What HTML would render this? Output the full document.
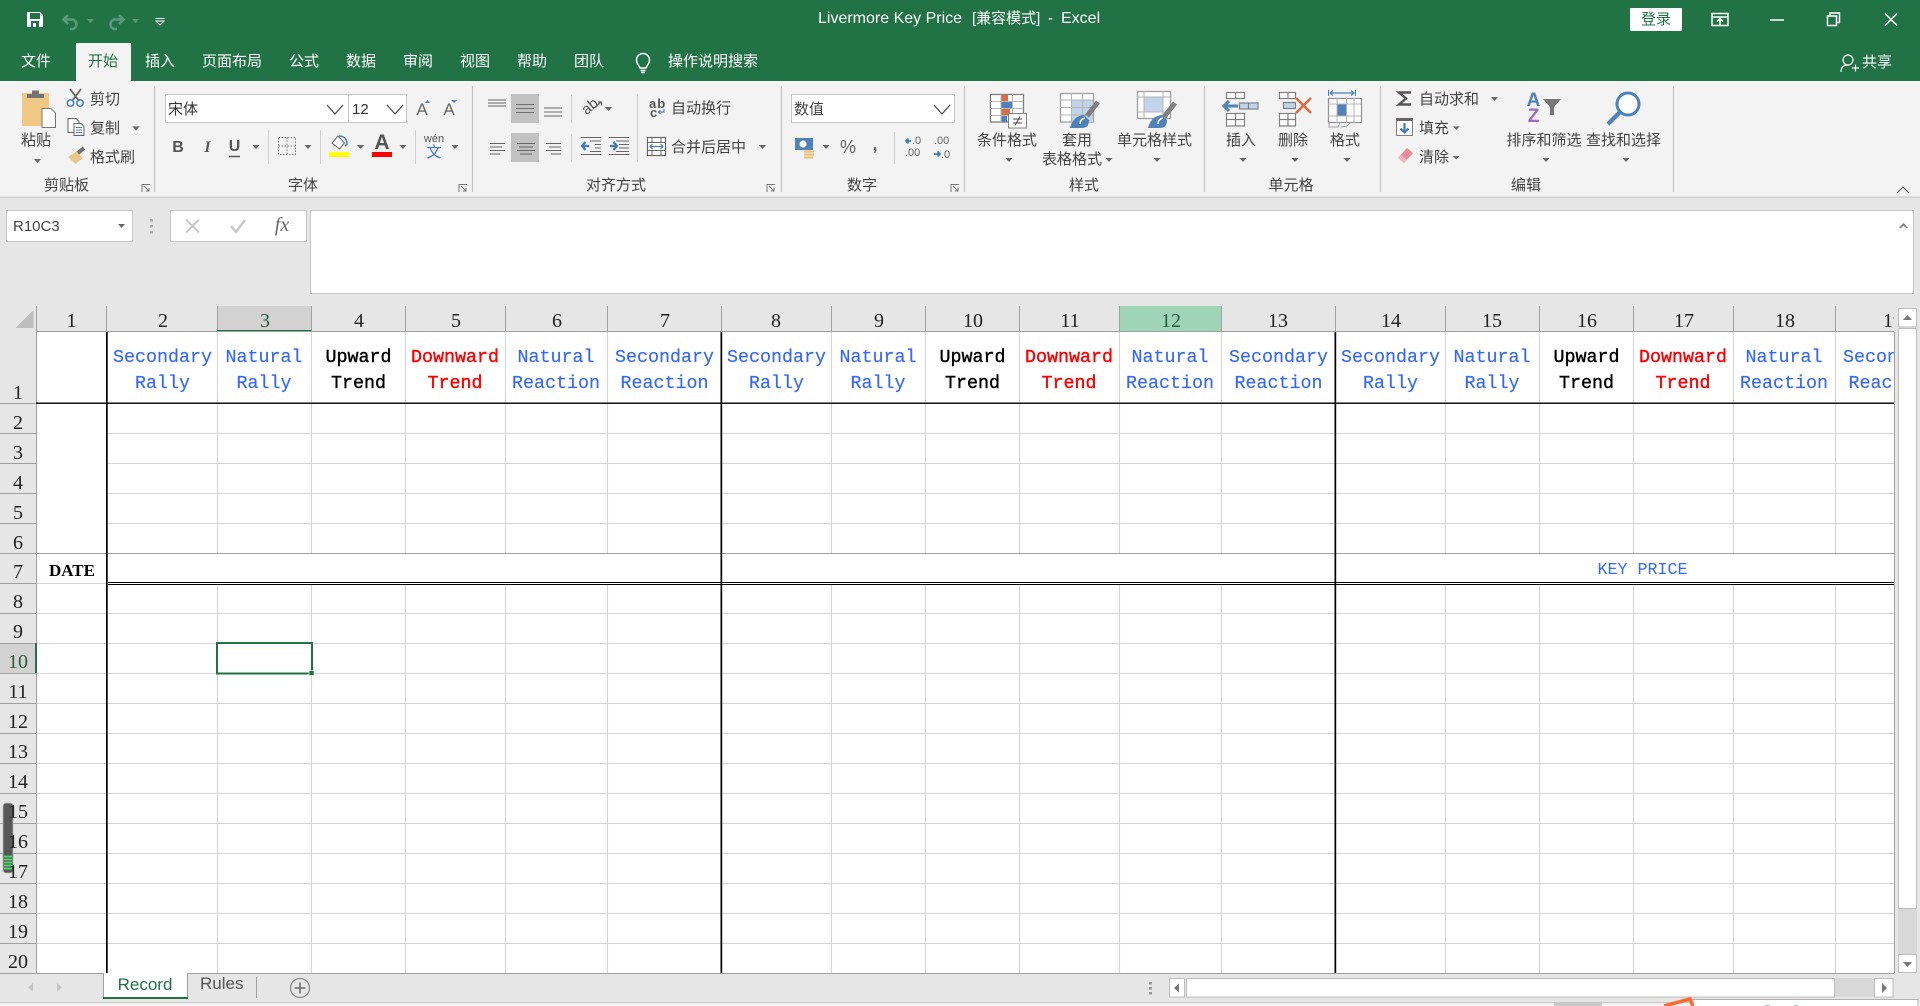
<!DOCTYPE html>
<html lang="zh"><head><meta charset="utf-8"><title>Livermore Key Price - Excel</title>
<style>
html,body{margin:0;padding:0;width:1920px;height:1006px;overflow:hidden;background:#e6e6e6}
body{position:relative;font-family:"Liberation Sans","Noto Sans CJK SC",sans-serif}
svg.g{position:absolute;left:0;top:0}
.t{position:absolute;white-space:nowrap;line-height:20px;font-size:15px;color:#444;margin-top:1px}
.c{transform:translateX(-50%)}
.w{color:#fff}
.n{font-family:"Liberation Serif",serif;font-size:20px;color:#222;line-height:20px}
.h{position:absolute;white-space:nowrap;font-family:"Liberation Mono",monospace;font-size:18.33px;line-height:26px;text-align:center;transform:translateX(-50%);margin-top:1px}
.b{color:#3366ff;-webkit-text-stroke:.15px #3366ff}.k{color:#000;-webkit-text-stroke:.4px #000}.r{color:#ff0000;-webkit-text-stroke:.4px #ff0000}
#clip{position:absolute;left:0;top:332px;width:1894px;height:72px;overflow:hidden}
</style></head><body>
<svg class="g" width="1920" height="1006" viewBox="0 0 1920 1006" xmlns="http://www.w3.org/2000/svg" fill="none">
<!-- title & ribbon backgrounds -->
<rect width="1920" height="81" fill="#217346"/>
<rect x="76" y="43" width="55" height="38" fill="#f3f3f3"/>
<rect y="81" width="1920" height="116" fill="#f3f3f3"/>
<rect y="196.500" width="1920" height="1.500" fill="#d2d2d2"/>
<!-- QAT -->
<path d="M27 12h13l3 3v12H27z" fill="#fff"/><rect x="30" y="13" width="10" height="6" fill="#217346"/><rect x="31" y="21" width="8" height="6" fill="#217346"/><rect x="33" y="23" width="3" height="4" fill="#fff"/>
<g stroke="#5a9a7b" stroke-width="2.600"><path d="M68 15l-4.500 4.500 4.500 4.500M64 19.500h9a5 5 0 0 1 0 9.500h-3"/><path d="M119 15l4.500 4.500-4.500 4.500M123 19.500h-9a5 5 0 0 0 0 9.500h3"/></g>
<path d="M87 19h7l-3.500 4zM132 19h7l-3.500 4z" fill="#5a9a7b"/>
<path d="M155.500 18.500h9M156 21h8l-4 4z" stroke="#fff" stroke-width="1"/>
<!-- window controls -->
<rect x="1630" y="8" width="52" height="23" rx="1" fill="#fff"/>
<g stroke="#fff" stroke-width="1.500"><rect x="1712" y="13.500" width="16" height="12"/><path d="M1712 17h16M1720 25v-6M1717 21.500l3-3 3 3"/><path d="M1770 20h14"/><rect x="1827.500" y="16" width="9" height="9.500"/><path d="M1830 16v-3h9.500v9.500h-3"/><path d="M1885 13.500l12 12M1897 13.500l-12 12"/>
<circle cx="1848" cy="60" r="5" stroke-width="1.200"/><path d="M1841 72c0-5 3-7 7-7M1852 68h7M1855.500 64.500v7" stroke-width="1.200"/></g>
<!-- bulb -->
<g stroke="#fff" stroke-width="1.500"><path d="M640 68c-1-3-3.500-4-3.500-8a6.500 6.500 0 0 1 13 0c0 4-2.500 5-3.500 8z"/><path d="M640.500 70.500h5M641 72.500h4"/></g>
<!-- ribbon separators -->
<path d="M154.500 86v106M472.500 86v106M781.500 86v106M964.500 86v106M1204.500 86v106M1380.500 86v106M1673.500 86v106" stroke="#c4c4c4" stroke-width="1.200"/>
<path d="M268.500 130v34M320.500 130v34M415.500 130v34M571.500 95v28M571.500 134v28M637.500 94v68M894.500 132v32" stroke="#d0d0d0"/>
<!-- dialog launchers -->
<g stroke="#777"><path d="M142 192v-7.500h8M144 186l5 5M149 188v3h-3"/><path d="M459 192v-7.500h8M461 186l5 5M466 188v3h-3"/><path d="M767 192v-7.500h8M769 186l5 5M774 188v3h-3"/><path d="M951 192v-7.500h8M953 186l5 5M958 188v3h-3"/></g>
<path d="M1897 193l6-6 6 6" stroke="#555" stroke-width="1.100"/>
<!-- Clipboard group -->
<rect x="22" y="93" width="27" height="33" rx="1" fill="#efc983"/><path d="M27 98v-4h5v-3.500h7v3.500h5v4z" fill="#737373"/>
<path d="M42 108.500h9l4.500 4.500v14.500H42z" fill="#fff" stroke="#777"/>
<path d="M34 159h7l-3.500 4zM132.500 126.500h7l-3.500 4z" fill="#666"/>
<g stroke="#666" stroke-width="1.800"><path d="M70 89l9 12M81 89l-9 12"/></g><g stroke="#4f82b8" stroke-width="1.600"><circle cx="70.500" cy="103" r="3.200"/><circle cx="80" cy="103" r="3.200"/></g>
<path d="M68 118.500h8l3 3v11H68z" fill="#fff" stroke="#666"/><path d="M74 123.500h7l3 3v9H74z" fill="#fff" stroke="#666"/><path d="M76 127.500h6M76 130h6M76 132.500h6" stroke="#4f82b8"/>
<path d="M68 157l9-6 5.500 7-7 6z" fill="#e8c78a"/><path d="M78 153l6-5" stroke="#6e6e6e" stroke-width="4"/>
<!-- Font boxes -->
<rect x="165.500" y="94.500" width="183" height="28" fill="#fff" stroke="#c6c6c6"/><rect x="348.500" y="94.500" width="58" height="28" fill="#fff" stroke="#c6c6c6"/>
<g stroke="#444" stroke-width="1.200"><path d="M327 105l8 9 8-9M387 105l8 9 8-9"/></g>
<path d="M425 103l2.500-3 2.500 3z" fill="#4f82b8"/><path d="M451 100h6l-3 3z" fill="#4f82b8"/>
<path d="M252.500 145h7l-3.500 4zM304.500 145h7l-3.500 4zM357 145h7l-3.500 4zM399.500 145h7l-3.500 4zM451.500 145h7l-3.500 4zM605 107h7l-3.500 4zM759 145h7l-3.500 4zM822.500 145h7l-3.500 4z" fill="#666"/>
<path d="M229 156.500h11" stroke="#555" stroke-width="1.500"/>
<path d="M278.500 137.500h17v17h-17zM287 137.500v17M278.500 146h17" stroke="#777" stroke-dasharray="1.500 1.500"/>
<path d="M332 143l6-7 6.500 7-5 6z" fill="#fff" stroke="#666"/><path d="M339 136c5 0 8 3 8 8l-2 2" stroke="#4f82b8" stroke-width="1.600"/>
<rect x="329" y="152" width="20" height="5" fill="#ffff00"/><rect x="372" y="152" width="20" height="5" fill="#ff0000"/>
<!-- Alignment -->
<rect x="511" y="94" width="28" height="29" fill="#c2c2c2"/><rect x="511" y="133" width="28" height="29" fill="#c2c2c2"/>
<g stroke="#666" stroke-width="1.100"><path d="M488 100h18M488 103h18M488 106h18"/><path d="M516 104.500h18M516 108.500h18M516 112.500h18" stroke="#707070"/><path d="M544 108h18M544 112h18M544 116h18"/>
<path d="M490 143.500h15M490 147h12M490 150.500h15M490 154h10"/><path d="M517 143.500h18M519 147h14M517 150.500h18M520 154h12"/><path d="M546 143.500h15M549 147h12M546 150.500h15M551 154h10"/>
<path d="M590 141h11M595 144.500h6M595 148h6M590 151.500h11"/><path d="M581 154.500h20M581 137.500h20"/><path d="M609 137.500h20M616 141h13M619 144.500h10M619 148h10M616 151.500h13M609 154.500h20"/></g>
<path d="M582 146h7M585.500 142l-3.500 4 3.500 4M610 146h7M613.500 142l3.500 4-3.500 4" stroke="#3f7ab7" stroke-width="2.200"/>
<path d="M594 108l7-6M598 102h3.500v3.500" stroke="#666" stroke-width="1.300"/>
<path d="M664 109v3h-5M660.500 110l-2 2 2 2" stroke="#4f82b8" stroke-width="1.200"/>
<rect x="647.500" y="137.500" width="18" height="18" fill="#fff" stroke="#666" stroke-width="1.200"/><path d="M647 142.500h19M647 150.500h19M652 137.500v5M661 137.500v5M652 150.500v5M661 150.500v5" stroke="#666"/><path d="M650 146.500h13M652.500 144l-2.500 2.500 2.500 2.500M660.500 144l2.500 2.500-2.500 2.500" stroke="#4f82b8" stroke-width="1.200"/>
<!-- Number -->
<rect x="791.500" y="94.500" width="163" height="28" fill="#fff" stroke="#c6c6c6"/>
<path d="M934 105l8 9 8-9" stroke="#444" stroke-width="1.200"/>
<rect x="795" y="138" width="18" height="12" fill="#4f82b8"/><circle cx="803" cy="144" r="3.500" fill="#fff"/><path d="M804 151.500h10M804 154.500h10M804 157.500h9" stroke="#eac27c" stroke-width="2.200"/>
<path d="M911 141h-5M908.500 138.500l-2.500 2.500 2.500 2.500M934 154h6M937.500 151.500l2.500 2.500-2.500 2.500" stroke="#3f7ab7" stroke-width="1.800"/>
<!-- Cond format -->
<g stroke="#808080" stroke-width="1.300"><rect x="990.500" y="94.500" width="33" height="27.500" fill="#fff"/></g>
<rect x="1001" y="95" width="7" height="6.500" fill="#da6b45"/><rect x="1001" y="102" width="12" height="6.500" fill="#4f82b8"/><rect x="1001" y="109" width="9" height="6.500" fill="#da6b45"/><rect x="1001" y="116" width="6" height="6" fill="#4f82b8"/>
<path d="M990 101.500h33M990 108.500h33M990 115.500h33M1001 94v28M1012.500 94v28" stroke="#b8b8b8"/>
<rect x="1008.500" y="113.500" width="18" height="14.500" fill="#fff" stroke="#808080"/><path d="M1013 119h9M1013 123h9M1020 116.500l-5 9" stroke="#444"/>
<!-- Table style -->
<rect x="1060.500" y="93.500" width="33" height="28.500" fill="#fff" stroke="#a0a0a0" stroke-width="1.300"/><rect x="1072" y="100" width="21" height="22" fill="#c0d5ea"/><path d="M1060 100h33M1060 107.500h33M1060 115h33M1071.500 93v29M1082.500 93v29" stroke="#b4b4b4"/>
<path d="M1098 102l-11 14" stroke="#808080" stroke-width="5"/>
<path d="M1070 128q3-12 14-13l5 5q0 8-7 8z" fill="#4f82b8"/><path d="M1080 124q0-5 5-6" stroke="#fff" stroke-width="1.500"/>
<!-- Cell style -->
<rect x="1137.500" y="91.500" width="33" height="27" fill="#fff" stroke="#a0a0a0" stroke-width="1.300"/><rect x="1144" y="97" width="19" height="15" fill="#c0d5ea"/><path d="M1137 97h33M1137 112h33M1144 91v27M1163 91v27" stroke="#b4b4b4"/>
<path d="M1175 103l-11 14" stroke="#808080" stroke-width="5"/>
<path d="M1148 128q3-12 14-13l5 5q0 8-7 8z" fill="#4f82b8"/><path d="M1158 124q0-5 5-6" stroke="#fff" stroke-width="1.500"/>
<!-- Insert -->
<g stroke="#808080" stroke-width="1.200"><rect x="1226.500" y="92.500" width="18" height="6" fill="#fff"/><path d="M1235.500 92v7"/><rect x="1239.500" y="103" width="18.500" height="6" fill="#c0d5ea"/><path d="M1248.500 103v6"/><rect x="1226.500" y="113.500" width="18" height="12.500" fill="#fff"/><path d="M1235.500 113v13M1226 119.500h18"/></g>
<path d="M1238 106h-14M1229 101l-5 5 5 5" stroke="#4f82b8" stroke-width="3"/>
<!-- Delete -->
<g stroke="#808080" stroke-width="1.200"><rect x="1279.500" y="92.500" width="16" height="6" fill="#fff"/><path d="M1288 92v7"/><rect x="1283.500" y="102.500" width="12" height="6" fill="#c0d5ea"/><rect x="1279.500" y="113.500" width="16" height="12.500" fill="#fff"/><path d="M1288 113v13M1279 119.500h16"/></g>
<path d="M1296 98l15 15M1311 98l-15 15" stroke="#da6b45" stroke-width="2.600"/>
<!-- Format -->
<path d="M1328.500 90v6M1355.500 90v6" stroke="#4f82b8"/><path d="M1330 93h24M1333 90.500l-3 2.500 3 2.500M1351 90.500l3 2.500-3 2.500" stroke="#4f82b8" stroke-width="1.300"/>
<rect x="1328.500" y="98.500" width="33" height="24" fill="#fff" stroke="#909090" stroke-width="1.200"/><rect x="1337" y="104" width="9.500" height="12" fill="#4f82b8"/><path d="M1337 98v25M1346.500 98v25M1354 98v25M1328 104h33M1328 116h33" stroke="#b4b4b4"/>
<path d="M1329 123v4h9l2-4M1341 127l6-1 3-3" stroke="#a0a0a0"/>
<!-- Editing -->
<path d="M1411 92.500h-12l7 6-7 6h12" stroke="#555" stroke-width="2.400"/>
<rect x="1396.500" y="118.500" width="16" height="17" fill="#fff" stroke="#808080"/><rect x="1396" y="118" width="17" height="3" fill="#666"/><path d="M1404.500 123v9M1400.500 128.500l4 4 4-4" stroke="#3f7ab7" stroke-width="2.200"/>
<path d="M1398 158l9-10 6 5-9 10z" fill="#e98b9d"/><path d="M1398 158l3-3 6 5-3 3z" fill="#f2b5c0"/>
<path d="M1491 97h7l-3.500 4zM1453 126.500h6.500l-3.250 3.500zM1453 156h6.500l-3.250 3.500z" fill="#666"/>
<path d="M1543 99h18l-7 8v8h-4v-8z" fill="#777"/>
<circle cx="1628" cy="104" r="11" fill="#fff" stroke="#4f82b8" stroke-width="3"/><path d="M1620 112l-12 12" stroke="#4f82b8" stroke-width="4.200"/>
<!-- carets under large buttons -->
<path d="M1005.500 158h7l-3.500 4zM1105.500 158h7l-3.500 4zM1153.500 158h7l-3.500 4zM1239.500 158h7l-3.500 4zM1291.500 158h7l-3.500 4zM1343.500 158h7l-3.500 4zM1542.500 158h7l-3.500 4zM1622.500 158h7l-3.500 4z" fill="#666"/>
<!-- Formula bar -->
<rect x="6.500" y="210.500" width="126" height="31" fill="#fff" stroke="#c6c6c6"/>
<path d="M118 224h7l-3.500 4z" fill="#666"/>
<path d="M150 219h3v2.500h-3zM150 225h3v2.500h-3zM150 231h3v2.500h-3z" fill="#aaa"/>
<rect x="170.500" y="210.500" width="136" height="31" fill="#fff" stroke="#c6c6c6"/>
<path d="M186 219.500l13 13M199 219.500l-13 13" stroke="#c8c8c8" stroke-width="2"/><path d="M231 226l5 6 9-12" stroke="#c8c8c8" stroke-width="2.400"/>
<rect x="310.500" y="210.500" width="1603" height="83" fill="#fff" stroke="#c6c6c6"/>
<path d="M1899 228l4.500-5 4.500 5h-2l-2.500-2.500-2.500 2.500z" fill="#777"/>
<!-- Column headers -->
<rect x="217" y="306" width="94.500" height="26" fill="#d2d2d2"/><rect x="1119" y="306" width="102" height="26" fill="#9fd5b7"/>
<path d="M36.500 306v26M106.500 306v26M217.500 306v26M311.500 306v26M405.500 306v26M505.500 306v26M607.500 306v26M721.500 306v26M831.500 306v26M925.500 306v26M1019.500 306v26M1119.500 306v26M1221.500 306v26M1335.500 306v26M1445.500 306v26M1539.500 306v26M1633.500 306v26M1733.500 306v26M1835.500 306v26" stroke="#a0a0a0"/>
<path d="M15.500 328l18-18v18z" fill="#bdbdbd"/>
<rect x="217" y="330" width="94.500" height="2" fill="#217346"/>
<!-- Sheet -->
<rect x="36" y="332" width="1858" height="641" fill="#fff"/>
<rect x="0" y="332" width="36" height="641" fill="#e6e6e6"/>
<rect x="0" y="643" width="36" height="30" fill="#d2d2d2"/>
<!-- light grid -->
<g stroke="#d4d4d4" stroke-width="1.100">
<path d="M217.500 332v221M311.500 332v221M405.500 332v221M505.500 332v221M607.500 332v221M831.500 332v221M925.500 332v221M1019.500 332v221M1119.500 332v221M1221.500 332v221M1445.500 332v221M1539.500 332v221M1633.500 332v221M1733.500 332v221M1835.500 332v221"/>
<path d="M217.500 585v388M311.500 585v388M405.500 585v388M505.500 585v388M607.500 585v388M831.500 585v388M925.500 585v388M1019.500 585v388M1119.500 585v388M1221.500 585v388M1445.500 585v388M1539.500 585v388M1633.500 585v388M1733.500 585v388M1835.500 585v388"/>
<path d="M107 433.500h1787M107 463.500h1787M107 493.500h1787M107 523.500h1787"/>
<path d="M36 583.500h71M36 613.500h1858M36 643.500h1858M36 673.500h1858M36 703.500h1858M36 733.500h1858M36 763.500h1858M36 793.500h1858M36 823.500h1858M36 853.500h1858M36 883.500h1858M36 913.500h1858M36 943.500h1858"/>
</g>
<!-- row header separators -->
<path d="M0 403.500h36M0 433.500h36M0 463.500h36M0 493.500h36M0 523.500h36M0 553.500h36M0 583.500h36M0 613.500h36M0 643.500h36M0 673.500h36M0 703.500h36M0 733.500h36M0 763.500h36M0 793.500h36M0 823.500h36M0 853.500h36M0 883.500h36M0 913.500h36M0 943.500h36M36.500 332v641" stroke="#a0a0a0"/>
<rect x="35" y="643" width="2" height="30" fill="#217346"/>
<!-- dark structural lines -->
<path d="M36 553.500h1858M36 331.500h1858M1894.500 332v641" stroke="#a0a0a0"/>
<path d="M0 973.500h103M188 973.500h1706" stroke="#a0a0a0"/>
<rect x="36" y="402.500" width="1858" height="1.400" fill="#000"/>
<rect x="108" y="582" width="1786" height="1" fill="#000"/><rect x="108" y="584" width="1786" height="1" fill="#000"/>
<rect x="106" y="332" width="1.700" height="641" fill="#000"/><rect x="720.500" y="332" width="1.700" height="641" fill="#000"/><rect x="1334.500" y="332" width="1.700" height="641" fill="#000"/>
<!-- selection -->
<rect x="217" y="643" width="95" height="30.500" fill="none" stroke="#217346" stroke-width="2"/>
<rect x="309" y="670.500" width="5" height="5" fill="#217346" stroke="#fff" stroke-width=".6"/>
<!-- left overlay widget -->
<rect x="3" y="803" width="10" height="70" rx="3" fill="#585858" stroke="#b8b8b8" stroke-width=".8"/>
<path d="M4 856.500h8M4 859.500h8M4 862.500h8M4 865.500h8M4 868.500h8" stroke="#47e06a" stroke-width="1.700"/>
<!-- Tabs -->
<rect x="103" y="973" width="85" height="25" fill="#fff"/>
<path d="M103.500 973v24M187.500 973v24" stroke="#a0a0a0"/>
<rect x="103" y="997" width="85" height="2" fill="#217346"/>
<path d="M256.500 977v21" stroke="#a0a0a0"/>
<path d="M33 983l-5 4.500 5 4.500zM57 983l5 4.500-5 4.500z" fill="#c6c6c6"/>
<circle cx="300" cy="988" r="9.500" stroke="#8a8a8a" stroke-width="1.300"/><path d="M300 982.500v11M294.500 988h11" stroke="#7a7a7a" stroke-width="1.800"/>
<path d="M1149 982h3v2.500h-3zM1149 987h3v2.500h-3zM1149 992h3v2.500h-3z" fill="#999"/>
<!-- Scrollbars -->
<rect x="1169.500" y="978.500" width="15" height="18.500" fill="#fff" stroke="#bdbdbd"/><path d="M1179 983.500l-5 4.500 5 4.500z" fill="#777"/>
<rect x="1186.500" y="978.500" width="648" height="18.500" fill="#fff" stroke="#bdbdbd"/>
<rect x="1835" y="978" width="39" height="19" fill="#d8d8d8"/>
<rect x="1874.500" y="978.500" width="18.500" height="18.500" fill="#fff" stroke="#bdbdbd"/><path d="M1882 983l5 5-5 5z" fill="#777"/>
<rect x="1898" y="328" width="19" height="626" fill="#d8d8d8"/>
<rect x="1898.500" y="308.500" width="18" height="18.500" fill="#fff" stroke="#bdbdbd"/><path d="M1903 320l4.500-5 4.500 5z" fill="#777"/>
<rect x="1898.500" y="328.500" width="18" height="580" fill="#fff" stroke="#bdbdbd"/>
<rect x="1898.500" y="954.500" width="18" height="18" fill="#fff" stroke="#bdbdbd"/><path d="M1903 962l4.500 5 4.500-5z" fill="#777"/>
<!-- status fragment -->
<rect y="1003" width="1920" height="3" fill="#f3f3f3"/><path d="M0 1002.500h1690" stroke="#c6c6c6"/>
<rect x="1554" y="1003" width="48" height="3" fill="#c8c8c8"/>
<rect x="1692" y="999.500" width="226" height="7" fill="#fff" stroke="#b0b0b0"/>
<path d="M1664 1006l26-7 3 7" stroke="#f96b2f" stroke-width="3.500"/>
<rect x="1765" y="1005" width="5" height="1" fill="#a9c7e6"/><rect x="1794" y="1005" width="4" height="1" fill="#a9c7e6"/>
</svg>

<!-- Title -->
<div class="t w" style="left:818px;top:8px;font-size:16px">Livermore Key Price</div>
<div class="t w" style="left:972px;top:8px">[兼容模式]</div>
<div class="t w" style="left:1048px;top:8px">-</div>
<div class="t w" style="left:1061px;top:8px;font-size:16px">Excel</div>
<div class="t c" style="left:1656px;top:9px;color:#217346">登录</div>
<div class="t w" style="left:21px;top:51px">文件</div>
<div class="t" style="left:88px;top:51px;color:#217346">开始</div>
<div class="t w" style="left:145px;top:51px">插入</div>
<div class="t w" style="left:202px;top:51px">页面布局</div>
<div class="t w" style="left:289px;top:51px">公式</div>
<div class="t w" style="left:346px;top:51px">数据</div>
<div class="t w" style="left:403px;top:51px">审阅</div>
<div class="t w" style="left:460px;top:51px">视图</div>
<div class="t w" style="left:517px;top:51px">帮助</div>
<div class="t w" style="left:574px;top:51px">团队</div>
<div class="t w" style="left:668px;top:51px">操作说明搜索</div>
<div class="t w" style="left:1862px;top:52px">共享</div>

<!-- Clipboard -->
<div class="t c" style="left:36px;top:130px">粘贴</div>
<div class="t" style="left:90px;top:89px">剪切</div>
<div class="t" style="left:90px;top:118px">复制</div>
<div class="t" style="left:90px;top:147px">格式刷</div>
<div class="t c" style="left:66.500px;top:175px">剪贴板</div>
<!-- Font -->
<div class="t" style="left:168px;top:99px;color:#333">宋体</div>
<div class="t" style="left:352px;top:99px;color:#333">12</div>
<div class="t c" style="left:422px;top:99px;font-size:17px;color:#666">A</div>
<div class="t c" style="left:449px;top:99px;font-size:17px;color:#666">A</div>
<div class="t c" style="left:178px;top:137px;font-size:16px;font-weight:bold;color:#555">B</div>
<div class="t c" style="left:207.500px;top:137px;font-size:16px;font-weight:bold;font-style:italic;font-family:'Liberation Serif',serif;color:#555">I</div>
<div class="t c" style="left:234.500px;top:136px;font-size:16px;font-weight:bold;color:#555">U</div>
<div class="t c" style="left:382px;top:132px;font-size:21px;font-weight:bold;color:#555">A</div>
<div class="t c" style="left:434px;top:128px;font-size:11px;color:#555">wén</div>
<div class="t c" style="left:434px;top:142px;font-size:15px;color:#3f7ab7">文</div>
<div class="t c" style="left:303px;top:175px">字体</div>
<!-- Alignment -->
<div class="t" style="left:582px;top:96px;font-size:15px;color:#555;transform:rotate(-40deg)">ab</div>
<div class="t" style="left:649px;top:93px;font-size:13px;letter-spacing:1px;font-weight:bold;color:#555">ab</div>
<div class="t" style="left:650px;top:102px;font-size:13px;font-weight:bold;color:#555">c</div>
<div class="t" style="left:671px;top:98px">自动换行</div>
<div class="t" style="left:671px;top:137px">合并后居中</div>
<div class="t c" style="left:616px;top:175px">对齐方式</div>
<!-- Number -->
<div class="t" style="left:794px;top:99px;color:#444">数值</div>
<div class="t c" style="left:848px;top:136px;font-size:18px;color:#666">%</div>
<div class="t c" style="left:875px;top:133px;font-size:18px;font-weight:bold;color:#666">,</div>
<div class="t" style="left:912px;top:130px;font-size:11px;color:#666">.0</div>
<div class="t" style="left:905px;top:142px;font-size:11px;color:#666">.00</div>
<div class="t" style="left:934px;top:130px;font-size:11px;color:#666">.00</div>
<div class="t" style="left:941px;top:144px;font-size:11px;color:#666">.0</div>
<div class="t c" style="left:862px;top:175px">数字</div>
<!-- Styles -->
<div class="t c" style="left:1007px;top:130px">条件格式</div>
<div class="t c" style="left:1077px;top:130px">套用</div>
<div class="t c" style="left:1072px;top:149px">表格格式</div>
<div class="t c" style="left:1154.500px;top:130px">单元格样式</div>
<div class="t c" style="left:1084px;top:175px">样式</div>
<!-- Cells -->
<div class="t c" style="left:1241px;top:130px">插入</div>
<div class="t c" style="left:1293px;top:130px">删除</div>
<div class="t c" style="left:1345px;top:130px">格式</div>
<div class="t c" style="left:1291px;top:175px">单元格</div>
<!-- Editing -->
<div class="t" style="left:1419px;top:89px">自动求和</div>
<div class="t" style="left:1419px;top:118px">填充</div>
<div class="t" style="left:1419px;top:147px">清除</div>
<div class="t c" style="left:1533.500px;top:90px;font-size:19px;color:#4f82b8;font-weight:bold">A</div>
<div class="t c" style="left:1533.500px;top:106px;font-size:19px;color:#9f6bbf;font-weight:bold">Z</div>
<div class="t c" style="left:1544px;top:130px">排序和筛选</div>
<div class="t c" style="left:1623.500px;top:130px">查找和选择</div>
<div class="t c" style="left:1526px;top:175px">编辑</div>
<!-- Formula -->
<div class="t" style="left:13px;top:216px;font-size:15px">R10C3</div>
<div class="t c" style="left:282px;top:214px;font-family:'Liberation Serif',serif;font-style:italic;font-size:20px;color:#666">fx</div>

<!-- Column numbers -->
<div class="t n c" style="left:71.500px;top:310px">1</div><div class="t n c" style="left:163px;top:310px">2</div><div class="t n c" style="left:265px;top:310px;color:#2c5c44">3</div><div class="t n c" style="left:359px;top:310px">4</div><div class="t n c" style="left:456px;top:310px">5</div><div class="t n c" style="left:557px;top:310px">6</div><div class="t n c" style="left:665px;top:310px">7</div><div class="t n c" style="left:776px;top:310px">8</div><div class="t n c" style="left:879px;top:310px">9</div><div class="t n c" style="left:973px;top:310px">10</div><div class="t n c" style="left:1070px;top:310px">11</div><div class="t n c" style="left:1171px;top:310px;color:#1f5f3e">12</div><div class="t n c" style="left:1278px;top:310px">13</div><div class="t n c" style="left:1391px;top:310px">14</div><div class="t n c" style="left:1492px;top:310px">15</div><div class="t n c" style="left:1587px;top:310px">16</div><div class="t n c" style="left:1684px;top:310px">17</div><div class="t n c" style="left:1785px;top:310px">18</div>
<div style="position:absolute;left:1836px;top:306px;width:58px;height:26px;overflow:hidden"><div class="t n" style="left:47px;top:4px">19</div></div>

<!-- Row numbers -->
<div class="t n c" style="left:18px;top:382px">1</div><div class="t n c" style="left:18px;top:412px">2</div><div class="t n c" style="left:18px;top:442px">3</div><div class="t n c" style="left:18px;top:472px">4</div><div class="t n c" style="left:18px;top:502px">5</div><div class="t n c" style="left:18px;top:532px">6</div><div class="t n c" style="left:18px;top:561px">7</div><div class="t n c" style="left:18px;top:591px">8</div><div class="t n c" style="left:18px;top:621px">9</div><div class="t n c" style="left:18px;top:651px;color:#2c5c44">10</div><div class="t n c" style="left:18px;top:681px">11</div><div class="t n c" style="left:18px;top:711px">12</div><div class="t n c" style="left:18px;top:741px">13</div><div class="t n c" style="left:18px;top:771px">14</div><div class="t n c" style="left:18px;top:801px">15</div><div class="t n c" style="left:18px;top:831px">16</div><div class="t n c" style="left:18px;top:861px">17</div><div class="t n c" style="left:18px;top:891px">18</div><div class="t n c" style="left:18px;top:921px">19</div><div class="t n c" style="left:18px;top:951px">20</div>

<!-- Header cells -->
<div id="clip">
<div class="h b" style="left:162.500px;top:12px">Secondary<br>Rally</div>
<div class="h b" style="left:264px;top:12px">Natural<br>Rally</div>
<div class="h k" style="left:358.500px;top:12px">Upward<br>Trend</div>
<div class="h r" style="left:455px;top:12px">Downward<br>Trend</div>
<div class="h b" style="left:556px;top:12px">Natural<br>Reaction</div>
<div class="h b" style="left:664.500px;top:12px">Secondary<br>Reaction</div>
<div class="h b" style="left:776.500px;top:12px">Secondary<br>Rally</div>
<div class="h b" style="left:878px;top:12px">Natural<br>Rally</div>
<div class="h k" style="left:972.500px;top:12px">Upward<br>Trend</div>
<div class="h r" style="left:1069px;top:12px">Downward<br>Trend</div>
<div class="h b" style="left:1170px;top:12px">Natural<br>Reaction</div>
<div class="h b" style="left:1278.500px;top:12px">Secondary<br>Reaction</div>
<div class="h b" style="left:1390.500px;top:12px">Secondary<br>Rally</div>
<div class="h b" style="left:1492px;top:12px">Natural<br>Rally</div>
<div class="h k" style="left:1586.500px;top:12px">Upward<br>Trend</div>
<div class="h r" style="left:1683px;top:12px">Downward<br>Trend</div>
<div class="h b" style="left:1784px;top:12px">Natural<br>Reaction</div>
<div class="h b" style="left:1892.500px;top:12px">Secondary<br>Reaction</div>
</div>
<div class="t c" style="left:72px;top:560px;font-family:'Liberation Serif',serif;font-weight:bold;font-size:17px;color:#000">DATE</div>
<div class="t c" style="left:1642.500px;top:560px;font-family:'Liberation Mono',monospace;font-size:16.670px;color:#3568ff">KEY PRICE</div>

<!-- Tabs -->
<div class="t c" style="left:145px;top:974px;font-size:17px;color:#217346">Record</div>
<div class="t" style="left:200px;top:973px;font-size:17px;color:#555">Rules</div>
</body></html>
